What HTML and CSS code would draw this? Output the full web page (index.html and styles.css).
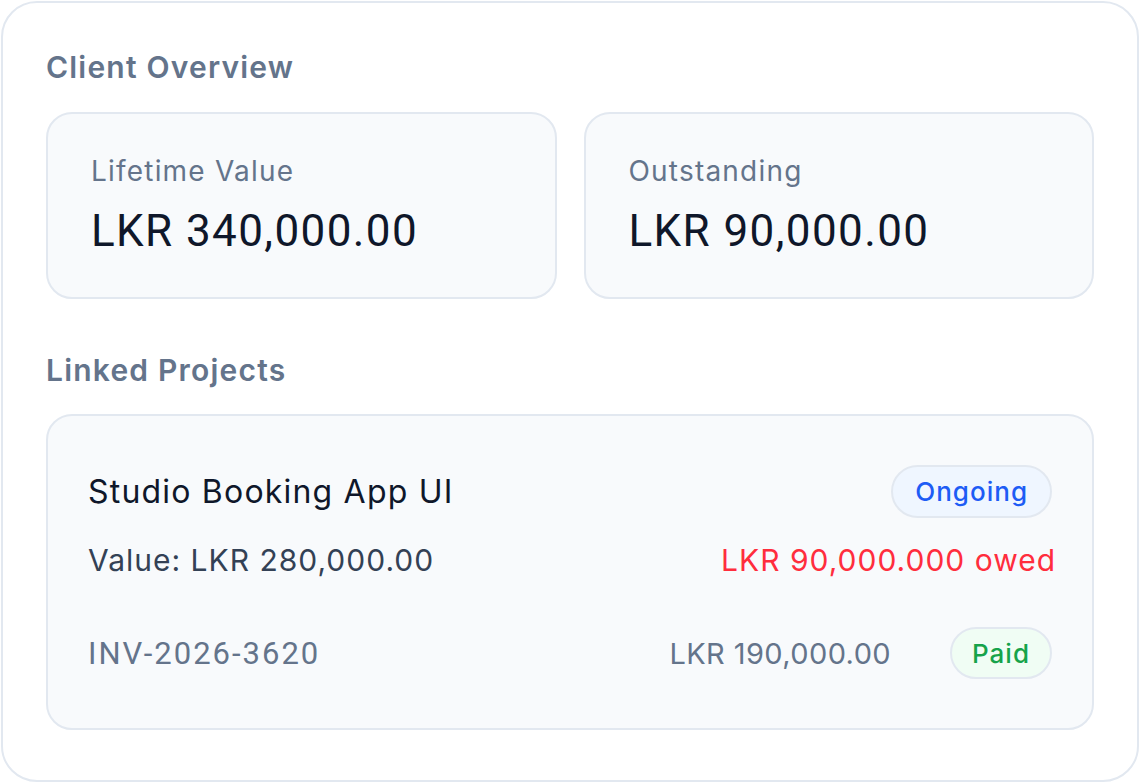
FILE: index.html
```html
<!DOCTYPE html>
<html lang="en">
<head>
    <meta charset="UTF-8">
    <meta name="viewport" content="width=device-width, initial-scale=1.0">
    <title>Client Overview</title>
    <link rel="stylesheet" href="styles.css">
</head>
<body>
    <div class="panel">
        <h2 class="section-title">Client Overview</h2>

        <div class="stats">
            <div class="stat-card">
                <div class="stat-label">Lifetime Value</div>
                <div class="stat-value">LKR 340,000.00</div>
            </div>
            <div class="stat-card">
                <div class="stat-label">Outstanding</div>
                <div class="stat-value">LKR 90,000.00</div>
            </div>
        </div>

        <h2 class="section-title linked">Linked Projects</h2>

        <div class="project-card">
            <div class="project-row">
                <span class="project-name">Studio Booking App UI</span>
                <span class="badge badge-ongoing">Ongoing</span>
            </div>
            <div class="project-row value-row">
                <span class="project-value">Value: LKR 280,000.00</span>
                <span class="project-owed">LKR 90,000.000 owed</span>
            </div>
            <div class="invoice-row">
                <span class="invoice-id">INV-2026-3620</span>
                <div class="invoice-right">
                    <span class="invoice-amount">LKR 190,000.00</span>
                    <span class="badge badge-paid">Paid</span>
                </div>
            </div>
        </div>
    </div>
</body>
</html>
```

FILE: styles.css
```css
body {
    margin: 0;
    background-color: #ffffff;
    font-family: Inter, "Open Sans", sans-serif;
    color: #0f172a;
}
.panel {
    box-sizing: border-box;
    height: 781px;
    margin: 1px 1px 0 1px;
    border: 2px solid #e2e8f0;
    border-radius: 36px;
    padding: 44px 43px 0 43px;
}
.section-title {
    margin: 0;
    font-size: 30px;
    font-weight: 600;
    line-height: 40px;
    letter-spacing: 1.2px;
    color: #64748b;
}
.section-title.linked {
    margin-top: 51px;
}
.stats {
    display: grid;
    grid-template-columns: 1fr 1fr;
    gap: 27px;
    margin-top: 25px;
}
.stat-card {
    box-sizing: border-box;
    height: 187px;
    background-color: #f8fafc;
    border: 2px solid #e2e8f0;
    border-radius: 26px;
    padding: 37px 43px 0 43px;
}
.stat-label {
    font-size: 28px;
    line-height: 40px;
    letter-spacing: 1.2px;
    color: #64748b;
}
.stat-value {
    margin-top: 12px;
    font-family: Roboto, sans-serif;
    font-size: 44px;
    line-height: 56px;
    letter-spacing: 1.4px;
    color: #0f172a;
}
.project-card {
    box-sizing: border-box;
    height: 316px;
    margin-top: 24px;
    background-color: #f8fafc;
    border: 2px solid #e2e8f0;
    border-radius: 26px;
    padding: 49px 36px 0 40px;
}
.project-row {
    display: flex;
    justify-content: space-between;
    align-items: center;
}
.value-row {
    margin-top: 22px;
    line-height: 40px;
}
.project-name {
    font-size: 32px;
    letter-spacing: 1.2px;
    color: #0f172a;
}
.project-value {
    font-size: 30px;
    letter-spacing: 1px;
    color: #334155;
}
.project-owed {
    font-size: 30px;
    letter-spacing: 1px;
    color: #ff2d3d;
}
.badge {
    box-sizing: border-box;
    display: inline-flex;
    align-items: center;
    justify-content: center;
    height: 53px;
    margin-right: 4px;
    padding: 0 22px;
    border: 2px solid #e2e8f0;
    border-radius: 27px;
    font-size: 26px;
    font-weight: 500;
    letter-spacing: 1px;
}
.badge-ongoing {
    background-color: #eff6ff;
    color: #1d5cf5;
}
.badge-paid {
    height: 52px;
    padding: 0 20px;
    background-color: #f0fdf4;
    color: #16a34a;
}
.invoice-row {
    display: flex;
    justify-content: space-between;
    align-items: center;
    margin-top: 47px;
}
.invoice-id {
    font-family: Roboto, sans-serif;
    font-size: 31px;
    letter-spacing: 2px;
    color: #64748b;
}
.invoice-right {
    display: flex;
    align-items: center;
    gap: 59px;
}
.invoice-amount {
    font-size: 29px;
    letter-spacing: 0.4px;
    color: #64748b;
}
```
